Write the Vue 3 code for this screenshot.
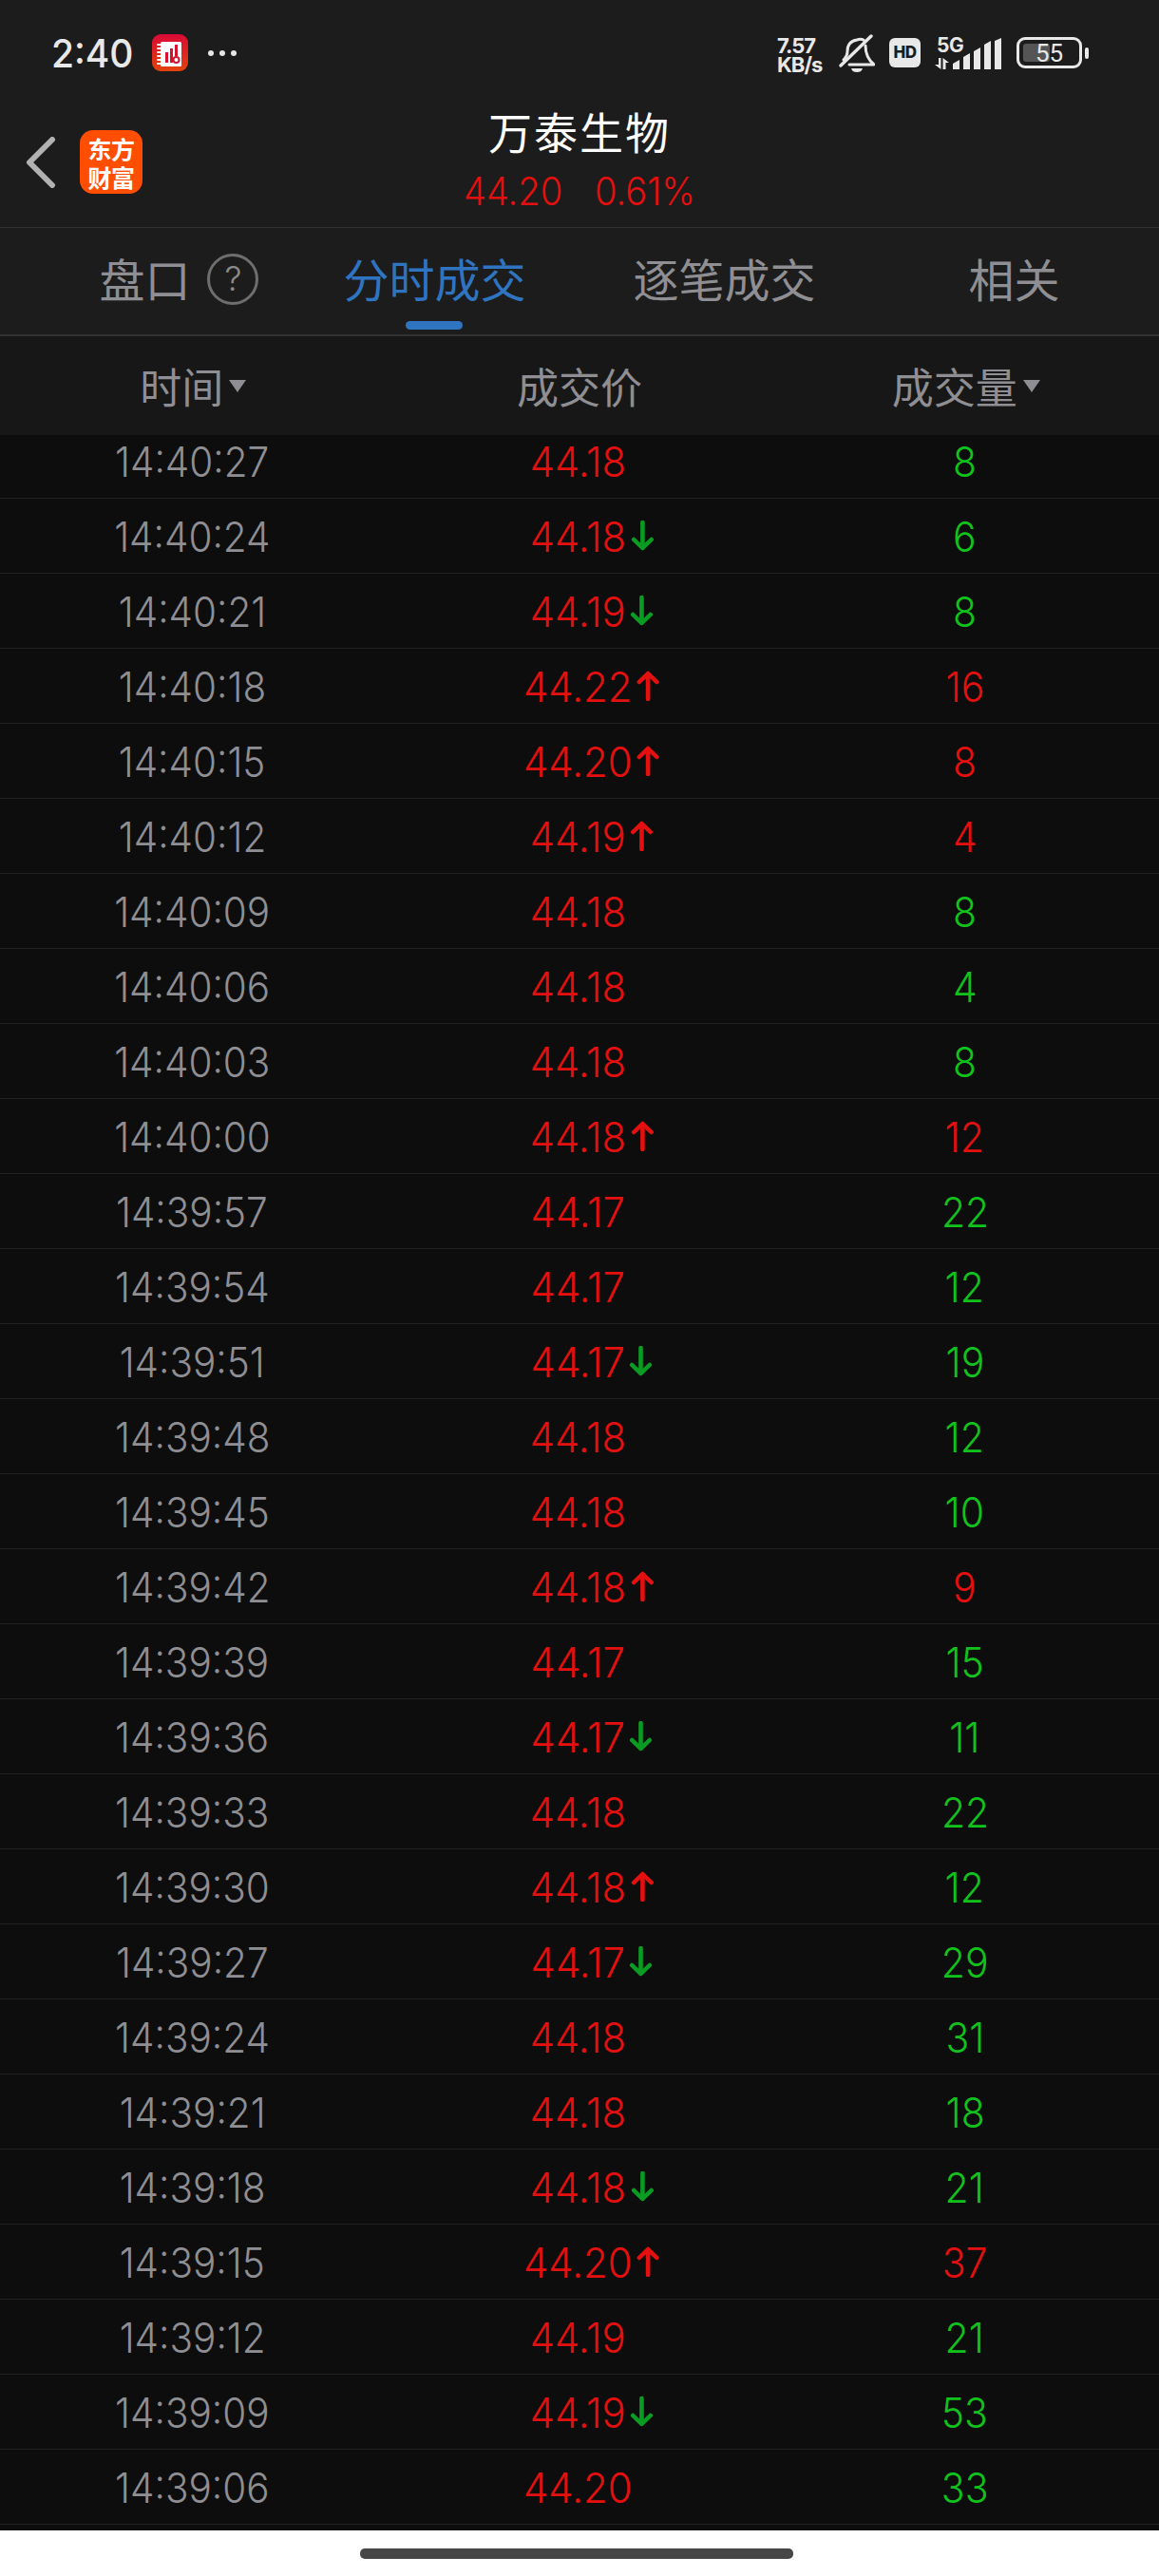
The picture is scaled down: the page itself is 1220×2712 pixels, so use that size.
<script setup>
const tabs = ['盘口', '分时成交', '逐笔成交', '相关']
const raw = [
  ['14:40:27', '44.18', '', '8', 'g'], ['14:40:24', '44.18', 'd', '6', 'g'], ['14:40:21', '44.19', 'd', '8', 'g'],
  ['14:40:18', '44.22', 'u', '16', 'r'], ['14:40:15', '44.20', 'u', '8', 'r'], ['14:40:12', '44.19', 'u', '4', 'r'],
  ['14:40:09', '44.18', '', '8', 'g'], ['14:40:06', '44.18', '', '4', 'g'], ['14:40:03', '44.18', '', '8', 'g'],
  ['14:40:00', '44.18', 'u', '12', 'r'], ['14:39:57', '44.17', '', '22', 'g'], ['14:39:54', '44.17', '', '12', 'g'],
  ['14:39:51', '44.17', 'd', '19', 'g'], ['14:39:48', '44.18', '', '12', 'g'], ['14:39:45', '44.18', '', '10', 'g'],
  ['14:39:42', '44.18', 'u', '9', 'r'], ['14:39:39', '44.17', '', '15', 'g'], ['14:39:36', '44.17', 'd', '11', 'g'],
  ['14:39:33', '44.18', '', '22', 'g'], ['14:39:30', '44.18', 'u', '12', 'g'], ['14:39:27', '44.17', 'd', '29', 'g'],
  ['14:39:24', '44.18', '', '31', 'g'], ['14:39:21', '44.18', '', '18', 'g'], ['14:39:18', '44.18', 'd', '21', 'g'],
  ['14:39:15', '44.20', 'u', '37', 'r'], ['14:39:12', '44.19', '', '21', 'g'], ['14:39:09', '44.19', 'd', '53', 'g'],
  ['14:39:06', '44.20', '', '33', 'g']
]
const rows = raw.map(([time, price, dir, vol, tone]) => ({ time, price, dir, vol, tone }))
</script>

<template>
  <div class="page">
    <div class="top">
      <div class="status">
        <div class="status-left">
          <span class="clock">2:40</span>
          <svg class="note" viewBox="0 0 38 39">
            <defs>
              <linearGradient id="noteBg" x1="0" y1="0" x2="0" y2="1">
                <stop offset="0" stop-color="#d90a35" />
                <stop offset="1" stop-color="#e2420c" />
              </linearGradient>
            </defs>
            <rect width="38" height="39" rx="9" fill="url(#noteBg)" />
            <rect x="9" y="8" width="22" height="26" rx="1.5" fill="#fff" />
            <path d="M9 11h-3M9 15h-3M9 19h-3M9 23h-3M9 27h-3M9 31h-3" stroke="#fff" stroke-width="2" stroke-linecap="round" />
            <path d="M14 19h3v11h-3zM19 15h3v15h-3zM24 11h3v12h-3z" fill="#d5122f" />
            <circle cx="25.5" cy="27" r="3" fill="none" stroke="#d5122f" stroke-width="2" />
          </svg>
          <svg class="dots" viewBox="0 0 32 8">
            <circle cx="4" cy="4" r="3" fill="#e6e6e6" />
            <circle cx="16" cy="4" r="3" fill="#e6e6e6" />
            <circle cx="28" cy="4" r="3" fill="#e6e6e6" />
          </svg>
        </div>
        <div class="status-right">
          <div class="speed">7.57 KB/s</div>
          <svg class="bell" viewBox="0 0 38 40">
            <path d="M5 27c3-3 4-6 4-9 0-7 4-11 10-12 3-1 6-1 8 1M28 12c0 8 3 15 9 20H11" fill="none" stroke="#e8e8e8" stroke-width="3" stroke-linecap="round" stroke-linejoin="round" />
            <path d="M13 36h12c-1 3-3 4-6 4s-5-1-6-4z" fill="#e8e8e8" />
            <path d="M2 33L34 2" stroke="#e8e8e8" stroke-width="3.4" stroke-linecap="round" />
          </svg>
          <span class="hd">HD</span>
          <div class="net">
            <span class="net-label">5G</span>
            <svg class="net-arrows" viewBox="0 0 16 12">
              <path d="M5 0h2.500v12L1 7h4zM9.500 0L16 5h-3.500v7h-3z" fill="#e8e8e8" />
            </svg>
          </div>
          <svg class="signal" viewBox="0 0 52 33">
            <path d="M0 33v-6l7-4v10z M11 33V20l7-4v17z M22 33V14l7-4v23z M33 33V7l7-4v30z M44 33V3l7-3v33z" fill="#e8e8e8" />
          </svg>
          <div class="battery">
            <div class="battery-body">
              <span class="battery-fill"></span>
              <span class="battery-text">55</span>
            </div>
            <span class="battery-tip"></span>
          </div>
        </div>
      </div>
      <div class="nav">
        <svg class="back" viewBox="0 0 32 54">
          <path d="M28 3L4 27l24 24" fill="none" stroke="#b2b2b2" stroke-width="6" stroke-linecap="round" stroke-linejoin="round" />
        </svg>
        <div class="logo"><span class="logo-text">东方财富</span></div>
        <div class="title">
          <div class="name">万泰生物</div>
          <div class="quote"><span class="squeeze">44.20</span><span class="squeeze">0.61%</span></div>
        </div>
      </div>
    </div>

    <div class="tabs">
      <div v-for="(t, i) in tabs" :key="t" class="tab" :class="{ active: i === 1 }">
        <span class="tab-label">
          {{ t }}
          <span v-if="i === 0" class="help">?</span>
          <span v-if="i === 1" class="underline"></span>
        </span>
      </div>
    </div>

    <div class="head">
      <div class="head-cell">时间<i class="caret"></i></div>
      <div class="head-cell">成交价</div>
      <div class="head-cell">成交量<i class="caret"></i></div>
    </div>

    <div class="list">
      <div v-for="r in rows" :key="r.time" class="row">
        <div class="cell"><span class="num time">{{ r.time }}</span></div>
        <div class="cell">
          <span class="num price">
            {{ r.price }}
            <svg v-if="r.dir === 'd'" class="arrow" viewBox="0 0 24 32" preserveAspectRatio="none">
              <path d="M12 2v27M3 20l9 9 9-9" fill="none" stroke="#0a9c22" stroke-width="4.500" stroke-linecap="round" stroke-linejoin="round" />
            </svg>
            <svg v-if="r.dir === 'u'" class="arrow" viewBox="0 0 24 32" preserveAspectRatio="none">
              <path d="M12 30V3M3 12l9-9 9 9" fill="none" stroke="#e3100f" stroke-width="4.500" stroke-linecap="round" stroke-linejoin="round" />
            </svg>
          </span>
        </div>
        <div class="cell"><span class="num vol" :class="r.tone === 'g' ? 'up' : 'down'">{{ r.vol }}</span></div>
      </div>
    </div>

    <div class="home"><span class="pill"></span></div>
  </div>
</template>

<style scoped>
.page {
  width: 1220px;
  height: 2712px;
  display: flex;
  flex-direction: column;
  background: #fff;
  overflow: hidden;
  font-family: "Noto Sans CJK SC", "Noto Sans", sans-serif;
}
.top {
  height: 239px;
  background: #1c1c1c;
  display: flex;
  flex-direction: column;
}
.status {
  height: 114px;
  padding: 36px 74px 0 54px;
  box-sizing: border-box;
  display: flex;
  justify-content: space-between;
  align-items: flex-start;
}
.status-left {
  display: flex;
  align-items: center;
  height: 39px;
}
.clock {
  font-family: Inter, sans-serif;
  font-size: 41px;
  font-weight: 500;
  color: #e8e8e8;
  width: 106px;
  transform: scaleX(0.95);
  transform-origin: left center;
}
.note {
  width: 38px;
  height: 39px;
}
.dots {
  width: 32px;
  height: 8px;
  margin-left: 20px;
}
.status-right {
  display: flex;
  align-items: flex-start;
  color: #e8e8e8;
  font-family: Inter, sans-serif;
}
.speed {
  width: 52px;
  height: 40px;
  font-size: 22px;
  line-height: 20px;
  font-weight: 700;
  letter-spacing: -1px;
  margin-top: 2px;
}
.bell {
  width: 38px;
  height: 40px;
  margin-left: 13px;
}
.hd {
  width: 33px;
  height: 31px;
  margin: 4px 0 0 15px;
  background: #e8e8e8;
  border-radius: 6px;
  color: #1c1c1c;
  font-size: 17px;
  line-height: 31px;
  font-weight: 800;
  text-align: center;
  letter-spacing: -0.5px;
}
.net {
  width: 31px;
  margin: 2px 0 0 14px;
  display: flex;
  flex-direction: column;
}
.net-label {
  font-size: 21px;
  line-height: 20px;
  font-weight: 700;
  letter-spacing: -0.5px;
  margin-left: 3px;
}
.net-arrows {
  width: 16px;
  height: 12px;
  margin-top: 3px;
}
.signal {
  width: 52px;
  height: 33px;
  margin: 4px 0 0 -11px;
}
.battery {
  display: flex;
  align-items: center;
  margin: 3px 0 0 15px;
}
.battery-body {
  position: relative;
  width: 69px;
  height: 33px;
  box-sizing: border-box;
  border: 3px solid #e8e8e8;
  border-radius: 9px;
  display: flex;
  align-items: center;
  justify-content: center;
}
.battery-fill {
  position: absolute;
  left: 4px;
  top: 4px;
  bottom: 4px;
  width: 28px;
  background: #555;
  border-radius: 3px;
}
.battery-text {
  position: relative;
  font-family: Roboto, sans-serif;
  font-size: 26px;
  color: #e8e8e8;
}
.battery-tip {
  width: 4px;
  height: 12px;
  margin-left: 3px;
  background: #e8e8e8;
  border-radius: 2px;
}
.nav {
  position: relative;
  flex: 1;
  display: flex;
  align-items: flex-start;
  padding: 30px 0 0 27px;
}
.back {
  width: 32px;
  height: 54px;
}
.logo {
  width: 66px;
  height: 67px;
  margin: -7px 0 0 25px;
  background: #ff4e02;
  border-radius: 14px;
  display: flex;
  align-items: center;
  justify-content: center;
}
.logo-text {
  width: 50px;
  color: #fff;
  font-size: 25px;
  line-height: 30px;
  font-weight: 700;
  letter-spacing: -0.5px;
  text-align: center;
  word-break: break-all;
}
.title {
  position: absolute;
  left: 0;
  right: 0;
  top: -2px;
  text-align: center;
}
.name {
  font-size: 46px;
  line-height: 50px;
  color: #fff;
  letter-spacing: 2px;
  font-weight: 400;
}
.quote {
  display: flex;
  justify-content: center;
  gap: 34px;
  margin-top: 16px;
  font-family: Inter, sans-serif;
  font-size: 41px;
  line-height: 46px;
  font-weight: 300;
  color: #e3100f;
}
.squeeze {
  display: inline-block;
  margin: 0 -4px;
  transform: scaleX(0.93);
  font-variant-numeric: proportional-nums;
}
.tabs {
  height: 115px;
  box-sizing: border-box;
  border-top: 1px solid #333;
  border-bottom: 2px solid #333;
  background: #1c1c1c;
  display: grid;
  grid-template-columns: repeat(4, 1fr);
}
.tab {
  display: flex;
  align-items: flex-start;
  justify-content: center;
  font-size: 48px;
  line-height: 60px;
  color: #8e8e93;
  padding-top: 22px;
}
.tab.active {
  color: #2f74c0;
}
.tab-label {
  position: relative;
}
.help {
  position: absolute;
  left: 114px;
  top: 5px;
  width: 54px;
  height: 54px;
  box-sizing: border-box;
  border: 3.500px solid #6e6e6e;
  border-radius: 50%;
  color: #8a8a8a;
  font-family: Inter, sans-serif;
  font-size: 36px;
  font-weight: 300;
  line-height: 47px;
  text-align: center;
}
.underline {
  position: absolute;
  left: 66px;
  top: 76px;
  width: 60px;
  height: 9px;
  border-radius: 5px;
  background: #2f74c0;
}
.head {
  height: 104px;
  background: #171717;
  display: grid;
  grid-template-columns: repeat(3, 1fr);
}
.head-cell {
  display: flex;
  align-items: center;
  justify-content: center;
  font-size: 44px;
  color: #8e8e93;
}
.caret {
  width: 0;
  height: 0;
  margin: 0 0 0 6px;
  border-left: 9px solid transparent;
  border-right: 9px solid transparent;
  border-top: 13px solid #8e8e93;
}
.list {
  height: 2206px;
  background: #0d0d0d;
  overflow: hidden;
}
.row {
  height: 79px;
  box-sizing: border-box;
  padding-top: 2px;
  border-bottom: 1px solid #222;
  display: grid;
  grid-template-columns: repeat(3, 1fr);
  align-items: center;
}
.row:first-child {
  margin-top: -12px;
}
.cell {
  display: flex;
  justify-content: center;
}
.num {
  position: relative;
  display: inline-block;
  font-family: Inter, sans-serif;
  font-size: 44px;
  line-height: 60px;
  font-weight: 350;
  font-variant-numeric: proportional-nums;
  transform: scaleX(0.93);
  left: -1px;
}
.time {
  color: #8e8e93;
  transform: scaleX(0.92);
}
.price {
  color: #e3100f;
  transform: scaleX(0.95);
  left: -2px;
}
.up {
  color: #12c21c;
}
.down {
  color: #e3100f;
}
.arrow {
  position: absolute;
  left: 100%;
  top: 13px;
  width: 26px;
  height: 32px;
  margin-left: 5px;
}
.home {
  flex: 1;
  display: flex;
  justify-content: center;
  padding: 19px 6px 0 0;
  background: #fff;
}
.pill {
  width: 456px;
  height: 11px;
  border-radius: 5px;
  background: #474747;
}
</style>
